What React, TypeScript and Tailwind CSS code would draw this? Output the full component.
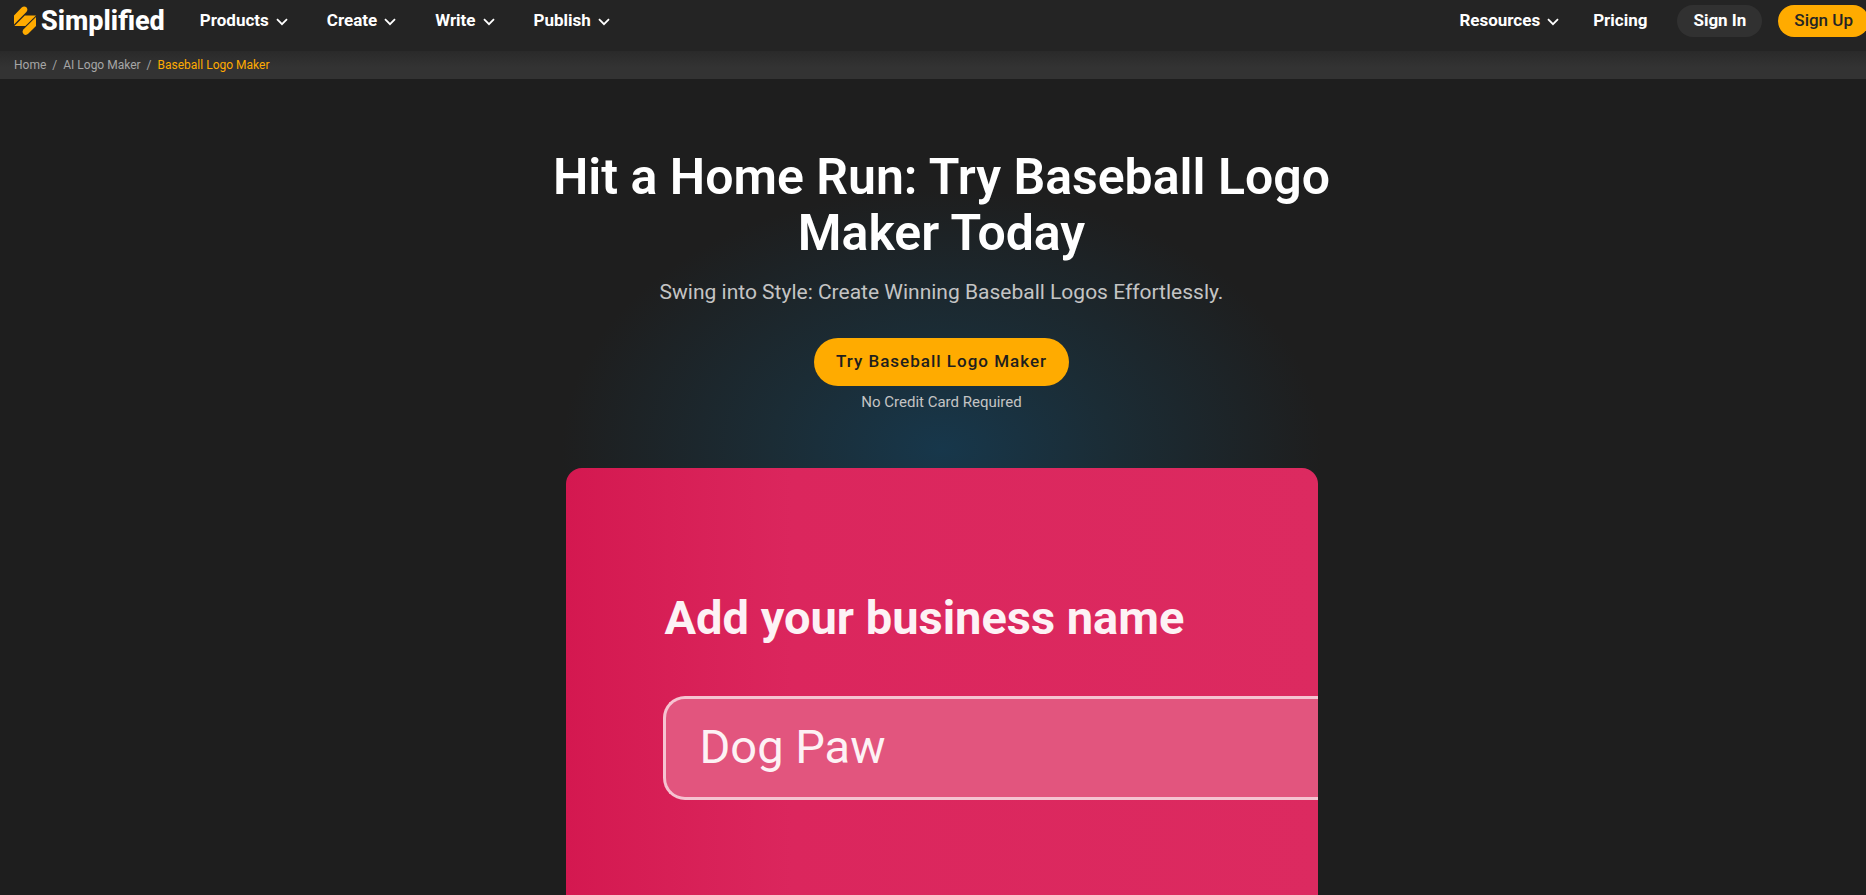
import React from "react";

const MenuConfig = [
  { title: "Products", key: "menu_1" },
  { title: "Create", key: "menu_2" },
  { title: "Write", key: "menu_3" },
  { title: "Publish", key: "menu_4" },
];

const Chevron = () => (
  <svg className="mt-0.5 h-2 w-3" viewBox="0 0 12 8" fill="none" aria-hidden="true">
    <path d="M1 1.2 6 6.2 11 1.2" stroke="currentColor" strokeWidth="1.8" />
  </svg>
);

const Logo = () => (
  <a href="#" className="flex items-center gap-1 text-white">
    <svg className="h-[30px] w-[23px]" viewBox="0 0 23 30" fill="#ffab00" aria-hidden="true">
      <path d="M0 18.5V9.6L7.7 1.6C9.1.1 11.1 0 12.4 1.3c1.4 1.4 1.3 3.4 0 4.7Z" />
      <path d="M10.8 9.4H22L11.4 20H.4Z" />
      <path d="M22 10.9v9l-7.8 7.9c-1.4 1.4-3.3 1.5-4.7.2-1.3-1.4-1.2-3.3.1-4.7Z" />
    </svg>
    <span className="text-[27px] leading-8 font-extrabold">Simplified</span>
  </a>
);

const MenuButton = ({ title }: { title: string }) => (
  <button className="flex items-center gap-[7px]">
    {title}
    <Chevron />
  </button>
);

const Header = () => {
  return (
    <header className="flex items-start justify-between overflow-hidden bg-[#242424] pt-[5px] pb-3.5 pl-3.5 text-[17px] font-bold text-white">
      <div className="flex h-8 items-center gap-[35px]">
        <Logo />
        <nav>
          <ul className="flex gap-[39px]">
            {MenuConfig.map((menu) => (
              <li key={menu.key}>
                <MenuButton title={menu.title} />
              </li>
            ))}
          </ul>
        </nav>
      </div>
      <div className="-mr-[3px] flex h-8 items-center">
        <MenuButton title="Resources" />
        <a href="#" className="mr-[30px] ml-[34px]">
          Pricing
        </a>
        <button className="mr-4 h-8 rounded-full bg-[#313131] px-4">Sign In</button>
        <button className="h-8 rounded-full bg-[#ffab00] px-4 font-medium text-[#242424]">
          Sign Up
        </button>
      </div>
    </header>
  );
};

const Breadcrumb = () => (
  <nav
    aria-label="Breadcrumb"
    className="flex h-7 items-center gap-1.5 bg-linear-to-b from-[#2a2a2a] to-[#333333] to-60% pl-3.5 text-xs text-[#a6a6a6]"
  >
    <a href="#">Home</a>
    <span>/</span>
    <a href="#">AI Logo Maker</a>
    <span>/</span>
    <a href="#" className="text-[#ffab00]">
      Baseball Logo Maker
    </a>
  </nav>
);

const Preview = () => (
  <div className="mt-14 flex w-full max-w-[752px] flex-1 flex-col overflow-hidden rounded-t-2xl bg-linear-to-r from-[#d41850] via-[#db265d] via-30% to-[#dc2a60] pt-[120px] pl-[97px] text-left text-[47px] text-[#fdf2f5]">
    <label htmlFor="business" className="pl-0.5 leading-[60px] font-bold">
      Add your business name
    </label>
    <input
      id="business"
      defaultValue="Dog Paw"
      className="mt-12 h-[104px] rounded-l-[22px] border-3 border-r-0 border-[#f6c3d1] bg-[#e2557e] pb-1 pl-[34px] outline-none"
    />
  </div>
);

const App = () => {
  return (
    <div className="flex min-h-screen flex-col bg-[#1e1e1e] font-[Roboto,sans-serif]">
      <Header />
      <Breadcrumb />
      <main className="flex flex-1 flex-col items-center bg-[radial-gradient(ellipse_380px_260px_at_942px_370px,#17374b,#1b2c35_45%,#1e1e1e)] pt-[70px] pl-[17px] text-center">
        <h1 className="max-w-[820px] text-[50px] leading-14 font-semibold text-white">
          Hit a Home Run: Try Baseball Logo Maker Today
        </h1>
        <p className="mt-[17px] text-[21px] leading-7 text-[#c4c4c4]">
          Swing into Style: Create Winning Baseball Logos Effortlessly.
        </p>
        <button className="mt-8 h-12 rounded-full bg-[#ffab00] px-[22px] text-[17px] font-medium tracking-[1px] text-[#1e1e1e]">
          Try Baseball Logo Maker
        </button>
        <p className="mt-1.5 text-[15px] leading-5 text-[#c4c4c4]">No Credit Card Required</p>
        <Preview />
      </main>
    </div>
  );
};

export default App;
